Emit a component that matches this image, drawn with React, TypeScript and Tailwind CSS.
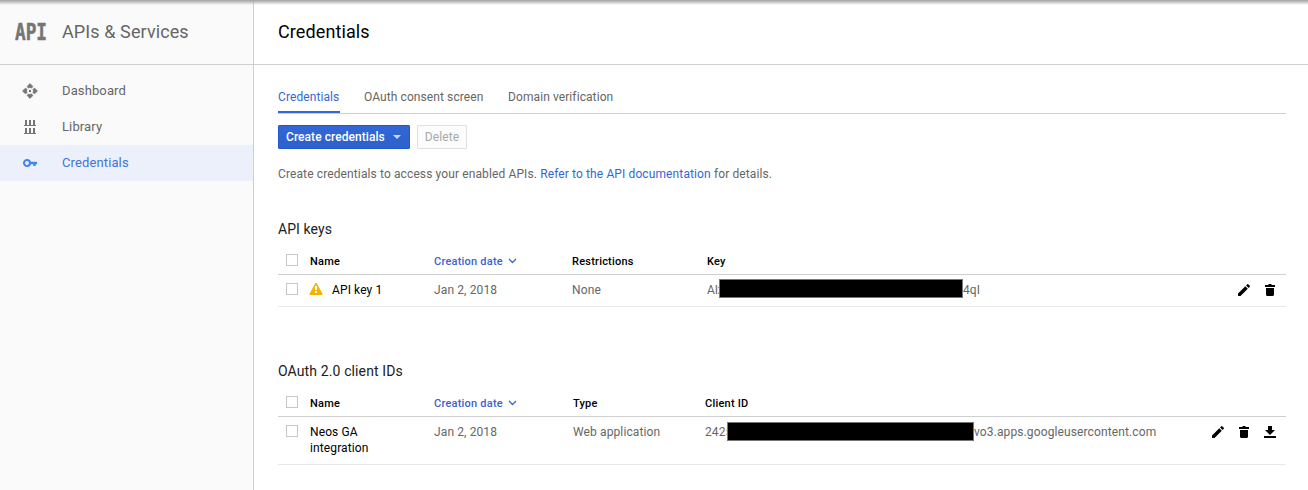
import type { ReactNode } from "react";

const ApiIcon = () => (
  <svg width="16" height="16" viewBox="0 0 16 16" fill="#757575" stroke="#757575" strokeWidth="0.8" strokeLinejoin="round">
    <path d="M8 .6 5.200 3.400 6.400 5.100 8 4.300 9.600 5.100 10.800 3.400ZM8 15.400 5.200 12.600 6.400 10.900 8 11.700 9.600 10.900 10.800 12.600ZM.6 8 3.400 5.200 5.100 6.400 4.300 8 5.100 9.600 3.400 10.800ZM15.400 8 12.600 5.200 10.900 6.400 11.700 8 10.900 9.600 12.600 10.800Z" />
    <circle cx="8" cy="8" r="1.200" stroke="none" />
  </svg>
);

const LibraryIcon = () => (
  <svg width="12" height="15" viewBox="0 0 12 15" fill="#757575" shapeRendering="crispEdges">
    <path d="M0 5h12v1H0zM1 0h2v5H1zM5 0h2v5H5zM9 0h2v5H9zM0 13h12v1H0zM1 8h2v5H1zM5 8h2v5H5zM9 8h2v5H9z" />
  </svg>
);

const KeyIcon = () => (
  <svg width="16" height="10" viewBox="0 0 16 10" fill="none" stroke="#4285f4">
    <circle cx="5" cy="5" r="3" strokeWidth="2.100" />
    <path d="M8 5h7M12.500 5v3" strokeWidth="2.400" />
  </svg>
);

const Pencil = () => (
  <svg width="14" height="14" viewBox="0 0 14 14" fill="#000">
    <path d="M1 10.500V13h2.500l7.300-7.300-2.500-2.500zM12.800 3.700a.7.700 0 0 0 0-.9L11.200 1.200a.7.700 0 0 0-.9 0L9.100 2.400l2.500 2.500z" />
  </svg>
);

const Trash = () => (
  <svg width="14" height="14" viewBox="0 0 14 14" fill="#000">
    <path d="M3 5h8v6.500a1.500 1.500 0 0 1-1.500 1.500h-5A1.500 1.500 0 0 1 3 11.500zM2 2h3l1-1h2l1 1h3v2H2z" />
  </svg>
);

const Download = () => (
  <svg width="14" height="14" viewBox="0 0 14 14" fill="#000">
    <path d="M5 1h4v4h3L7 10 2 5h3zM1 11h12v2H1z" />
  </svg>
);

const Warning = () => (
  <svg width="14" height="14" viewBox="0 0 14 14">
    <path d="M7 2 1.500 12h11z" fill="#f4b400" stroke="#f4b400" strokeWidth="2" strokeLinejoin="round" />
    <path d="M6 4h2v4H6zM6 9h2v2H6z" fill="#fff" />
  </svg>
);

const Checkbox = () => <div className="ml-2 size-3 shrink-0 border border-[#c6c6c6] bg-white" />;

const Sort = () => (
  <svg className="mb-[2px] ml-[5px]" width="9" height="6" viewBox="0 0 9 6" fill="none" stroke="#3367d6" strokeWidth="1.300">
    <path d="M1 1l3.500 3.500L8 1" />
  </svg>
);

function NavItem({ icon, label, active }: { icon: ReactNode; label: string; active?: boolean }) {
  return (
    <div className={`flex h-9 items-center text-[13px] ${active ? "bg-[#ebf0fa] text-[#4272db]" : "text-[#666]"}`}>
      <div className="flex w-[62px] justify-center pr-[2px]">{icon}</div>
      <span className="tracking-[0.12px]">{label}</span>
    </div>
  );
}

function HeaderRow({ third, fourth, cols }: { third: string; fourth: string; cols: string }) {
  return (
    <div className={`grid h-[29px] border-b border-[#cfcfcf] text-[11px] font-medium leading-[31px] tracking-[0.22px] text-black ${cols}`}>
      <div className="flex pt-2"><Checkbox /></div>
      <div>Name</div>
      <div className="flex h-[31px] items-center text-[#3b62d0]">Creation date<Sort /></div>
      <div>{third}</div>
      <div>{fourth}</div>
    </div>
  );
}

const keyCols = "grid-cols-[32px_124px_138px_135px_1fr_auto]";
const clientCols = "grid-cols-[32px_124px_139px_132px_1fr_auto]";

export default function App() {
  return (
    <div className="relative flex h-[490px] w-full overflow-hidden bg-white font-['Roboto',sans-serif] text-xs text-[#666]">
      <div className="absolute inset-x-0 top-0 h-[5px] bg-linear-to-b from-[#a0a0a0] to-transparent" />
      <aside className="w-[254px] shrink-0 border-r border-[#cfcfcf] bg-[#fafafa]">
        <div className="flex h-[65px] items-center border-b border-[#cfcfcf]">
          <div className="ml-[15px] w-[47px]">
            <span className="inline-block origin-left scale-x-[0.77] font-['DejaVu_Sans_Mono',monospace] text-[23px] font-bold leading-none text-[#757575] [-webkit-text-stroke:0.5px_#757575]">API</span>
          </div>
          <span className="text-lg font-normal tracking-[0.1px]">APIs &amp; Services</span>
        </div>
        <nav className="pt-2">
          <NavItem icon={<ApiIcon />} label="Dashboard" />
          <NavItem icon={<LibraryIcon />} label="Library" />
          <NavItem icon={<KeyIcon />} label="Credentials" active />
        </nav>
      </aside>
      <main className="min-w-0 flex-1">
        <h1 className="flex h-[65px] items-center border-b border-[#cfcfcf] pl-6 text-lg font-normal tracking-[0.1px] text-black">Credentials</h1>
        <div className="ml-6 mr-[22px]">
          <div className="flex h-[49px] items-end gap-6 border-b border-[#cfcfcf] leading-4 tracking-[0.09px]">
            <div className="w-[62px] whitespace-nowrap border-b-2 border-[#3367d6] pb-1.5 text-[#3367d6]">Credentials</div>
            <div className="w-[120px] whitespace-nowrap pb-2">OAuth consent screen</div>
            <div className="whitespace-nowrap pb-2">Domain verification</div>
          </div>
          <div className="flex gap-[7px] pt-[11px]">
            <button className="flex h-6 w-[132px] items-center rounded-[1px] border border-[#1f57cc] bg-linear-to-b from-[#3367d6] to-[#2c60cc] pl-[7px] font-medium tracking-[0.06px] text-white">
              Create credentials
              <span className="ml-2 border-x-4 border-t-4 border-x-transparent border-t-[#c8d8f8]" />
            </button>
            <button className="h-6 w-[50px] rounded-[1px] border border-[#e0e0e0] bg-[#fcfcfc] tracking-[0.1px] text-[#a8a8a8]">Delete</button>
          </div>
          <p className="mt-4 leading-[18px] tracking-[0.117px]">
            Create credentials to access your enabled APIs. <a className="text-[#3367d6]">Refer to the API documentation</a> for details.
          </p>
          <section className="mt-9 h-[142px]">
            <h2 className="h-[27px] text-sm leading-5 tracking-[0.08px] text-[#212121]">API keys</h2>
            <HeaderRow third="Restrictions" fourth="Key" cols={keyCols} />
            <div className={`grid h-8 border-b border-[#e8e8e8] leading-[30px] tracking-[0.12px] ${keyCols}`}>
              <div className="pt-2"><Checkbox /></div>
              <div className="flex text-black"><span className="-ml-px mr-[9px] pt-[7px]"><Warning /></span>API key 1</div>
              <div>Jan 2, 2018</div>
              <div>None</div>
              <div className="flex">
                <span className="w-3 tracking-[-0.2px]">AIz</span>
                <span className="relative mt-1 h-[19px] w-[244px] border border-[#777] bg-black" />
                <span>4qI</span>
              </div>
              <div className="flex gap-3 pr-[9px] pt-2"><Pencil /><Trash /></div>
            </div>
          </section>
          <section>
            <h2 className="h-[27px] text-sm leading-5 tracking-[0.12px] text-[#212121]">OAuth 2.0 client IDs</h2>
            <HeaderRow third="Type" fourth="Client ID" cols={clientCols} />
            <div className={`grid h-12 border-b border-[#e8e8e8] leading-[30px] tracking-[0.115px] ${clientCols}`}>
              <div className="pt-2"><Checkbox /></div>
              <div className="pt-[7px] leading-4 text-black">Neos GA<br />integration</div>
              <div>Jan 2, 2018</div>
              <div>Web application</div>
              <div className="flex">
                <span className="w-[22px]">2425</span>
                <span className="relative mt-[5px] h-[19px] w-[247px] border border-[#777] bg-black" />
                <span>vo3.apps.googleusercontent.com</span>
              </div>
              <div className="flex gap-3 pr-[9px] pt-2"><Pencil /><Trash /><Download /></div>
            </div>
          </section>
        </div>
      </main>
    </div>
  );
}
